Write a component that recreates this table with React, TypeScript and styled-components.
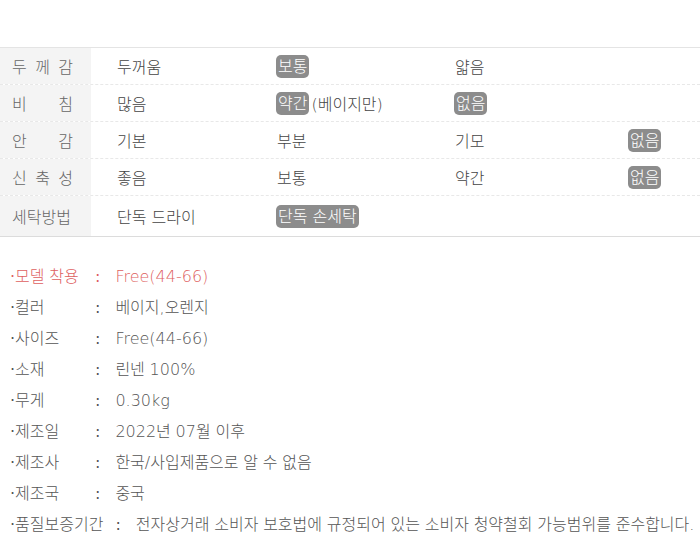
import React from "react";
import styled, { createGlobalStyle } from "styled-components";

const Global = createGlobalStyle`
  html, body { margin: 0; padding: 0; background: #fff; }
  body { font-family: "DejaVu Sans", "Noto Sans CJK KR", sans-serif; }
`;

const Page = styled.div`
  width: 700px;
  padding-top: 47px;
  color: #444;
  font-weight: 300;
`;

const Table = styled.div`
  border-top: 1px solid #e4e4e4;
  border-bottom: 1px solid #dcdcdc;
`;

const Row = styled.div<{ $last?: boolean }>`
  display: grid;
  grid-template-columns: 91px 160px 178px 174px 1fr;
  height: ${(p) => (p.$last ? 40 : 36)}px;
  border-bottom: ${(p) => (p.$last ? "none" : "1px dashed #e8e8e8")};
  font-size: 16px;
`;

const Head = styled.div`
  background: #f4f4f4;
  display: flex;
  align-items: center;
  padding-left: 12px;
  color: #666;
`;

const HeadText = styled.span<{ $spread?: boolean }>`
  display: block;
  width: 61px;
  text-align: ${(p) => (p.$spread ? "justify" : "left")};
  text-align-last: ${(p) => (p.$spread ? "justify" : "left")};
  white-space: nowrap;
`;

const Cell = styled.div`
  display: flex;
  align-items: center;
  padding-left: 26px;
  white-space: nowrap;
  color: #444;
`;

const Badge = styled.span`
  display: inline-block;
  background: #8c8c8c;
  color: #fff;
  border-radius: 5px;
  padding: 0 2px;
  height: 23px;
  line-height: 23px;
  margin-left: -1px;
  margin-right: 2px;
`;

const Suffix = styled.span`
  color: #444;
`;

const List = styled.ul`
  list-style: none;
  margin: 24px 0 0;
  padding: 0 0 0 10px;
  font-size: 16px;
  word-spacing: -0.3px;
`;

const Item = styled.li<{ $accent?: boolean }>`
  display: flex;
  height: 31px;
  line-height: 31px;
  white-space: nowrap;
  color: ${(p) => (p.$accent ? "#de5f5f" : "#555")};
`;

const Label = styled.span`
  display: inline-block;
  min-width: 73px;
  margin-right: 12px;
`;

const Bullet = styled.span`
  font-weight: 400;
`;

const Colon = styled.span`
  font-weight: 400;
  margin-right: 15px;
`;

const Value = styled.span``;

type CellVal = { text: string; badge?: boolean; suffix?: string } | null;

const rows: { label: string; spread?: boolean; cells: CellVal[] }[] = [
  {
    label: "두 께 감",
    spread: true,
    cells: [{ text: "두꺼움" }, { text: "보통", badge: true }, { text: "얇음" }, null],
  },
  {
    label: "비 침",
    spread: true,
    cells: [{ text: "많음" }, { text: "약간", badge: true, suffix: "(베이지만)" }, { text: "없음", badge: true }, null],
  },
  {
    label: "안 감",
    spread: true,
    cells: [{ text: "기본" }, { text: "부분" }, { text: "기모" }, { text: "없음", badge: true }],
  },
  {
    label: "신 축 성",
    spread: true,
    cells: [{ text: "좋음" }, { text: "보통" }, { text: "약간" }, { text: "없음", badge: true }],
  },
  {
    label: "세탁방법",
    cells: [{ text: "단독 드라이" }, { text: "단독 손세탁", badge: true }, null, null],
  },
];

const info: { label: string; value: string; accent?: boolean }[] = [
  { label: "모델 착용", value: "Free(44-66)", accent: true },
  { label: "컬러", value: "베이지,오렌지" },
  { label: "사이즈", value: "Free(44-66)" },
  { label: "소재", value: "린넨 100%" },
  { label: "무게", value: "0.30kg" },
  { label: "제조일", value: "2022년 07월 이후" },
  { label: "제조사", value: "한국/사입제품으로 알 수 없음" },
  { label: "제조국", value: "중국" },
  { label: "품질보증기간", value: "전자상거래 소비자 보호법에 규정되어 있는 소비자 청약철회 가능범위를 준수합니다." },
];

export default function App() {
  return (
    <Page>
      <Global />
      <Table>
        {rows.map((r, i) => (
          <Row key={r.label} $last={i === rows.length - 1}>
            <Head>
              <HeadText $spread={r.spread}>{r.label}</HeadText>
            </Head>
            {r.cells.map((c, j) => (
              <Cell key={j}>
                {c &&
                  (c.badge ? (
                    <>
                      <Badge>{c.text}</Badge>
                      {c.suffix && <Suffix>{c.suffix}</Suffix>}
                    </>
                  ) : (
                    c.text
                  ))}
              </Cell>
            ))}
          </Row>
        ))}
      </Table>
      <List>
        {info.map((it) => (
          <Item key={it.label} $accent={it.accent}>
            <Label>
              <Bullet>·</Bullet>
              {it.label}
            </Label>
            <Colon>:</Colon>
            <Value>{it.value}</Value>
          </Item>
        ))}
      </List>
    </Page>
  );
}
